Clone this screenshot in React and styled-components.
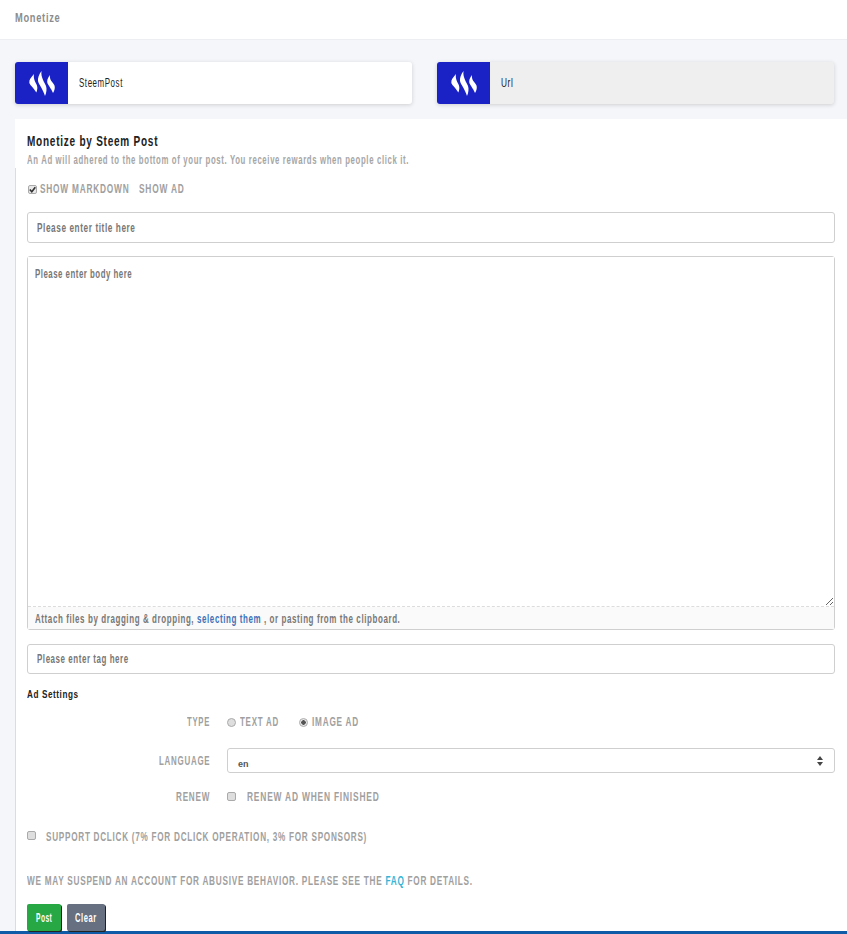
import React from "react";
import styled, { createGlobalStyle, css } from "styled-components";

const sans = `"Liberation Sans", Arial, sans-serif`;
const checkSvg = `url("data:image/svg+xml,%3Csvg xmlns='http://www.w3.org/2000/svg' width='9' height='9'%3E%3Cpath d='M1.800 4.500l2 2.200 3.500-4.400' fill='none' stroke='%23333' stroke-width='1.700'/%3E%3C/svg%3E")`;

const Global = createGlobalStyle`
  html, body { margin: 0; padding: 0; background: #f5f6f9; }
  body { font-family: ${sans}; overflow: hidden; }
  * { box-sizing: border-box; }
`;

/* The reference uses a condensed display face; no such font is installed, so
   text is drawn in Liberation Sans and narrowed to the width it has there. */
const Cond = styled.span`
  display: inline-block;
  flex: none;
  width: ${p => p.$w}px;
  margin-left: ${p => p.$ml || 0}px;
  white-space: nowrap;
  transform: scaleX(${p => p.$s});
  transform-origin: left center;
`;

const Page = styled.div`
  height: 934px;
  display: flex;
  flex-direction: column;
  overflow: hidden;
`;
const TopBar = styled.header`
  height: 40px;
  flex: none;
  background: #fff;
  border-bottom: 1px solid #eceef1;
  padding: 10px 15px 0;
  font-size: 13px;
  line-height: 15px;
  font-weight: 700;
  letter-spacing: 0.975px;
  color: #8c8c8c;
`;
const Cards = styled.div`
  display: grid;
  grid-template-columns: 397px 397px;
  gap: 25px;
  padding: 22px 0 15px 15px;
  flex: none;
`;
const Card = styled.div`
  height: 42px;
  display: flex;
  align-items: center;
  background: ${p => (p.$muted ? "#efefef" : "#fff")};
  border-radius: 3px;
  box-shadow: 0 1px 4px rgba(0, 0, 0, 0.16);
  overflow: hidden;
`;
const CardIcon = styled.div`
  width: 53px;
  height: 42px;
  flex: none;
  background: #1a22c6;
  display: flex;
  align-items: center;
  justify-content: center;
`;
const CardLabel = styled.div`
  margin-left: 11px;
  font-size: 12px;
  letter-spacing: 0.87px;
  color: #222;
`;
const Content = styled.main`
  flex: 1;
  margin-left: 15px;
  background: #fff;
  padding: 14px 12px 0;
  position: relative;
`;
const SideLine = styled.div`
  position: absolute;
  left: 0;
  top: 49px;
  bottom: 0;
  width: 1px;
  background: #dcdcdc;
`;
const Title = styled.h2`
  margin: 0;
  font-size: 15px;
  line-height: 16px;
  font-weight: 700;
  letter-spacing: 1.125px;
  color: #222;
`;
const Sub = styled.p`
  margin: 4px 0 0;
  font-size: 12px;
  line-height: 14px;
  font-weight: 700;
  letter-spacing: 1px;
  color: #a6a6a6;
`;
const labelText = css`
  font-size: 12px;
  line-height: 14px;
  font-weight: 700;
  letter-spacing: 1.14px;
  color: #a0a0a0;
`;
const Tabs = styled.div`
  ${labelText}
  display: flex;
  align-items: center;
  margin-top: 14px;
  height: 16px;
`;
const box = css`
  appearance: none;
  width: 9px;
  height: 9px;
  flex: none;
  background-color: #dedede;
  border: 1px solid #aaa;
`;
const Check = styled.input.attrs({ type: "checkbox" })`
  ${box}
  border-radius: 2px;
  margin: ${p => p.$m || "0 3px 0 1px"};
  transform: translateY(${p => p.$up || 0}px);
  &:checked {
    background-image: ${checkSvg};
    background-position: center;
    background-repeat: no-repeat;
    background-color: #e8e8e8;
  }
`;
const Radio = styled.input.attrs({ type: "radio" })`
  ${box}
  border-radius: 50%;
  margin: ${p => p.$m || "0 4px 0 0"};
  &:checked {
    background: radial-gradient(circle, #555 0 2px, #e8e8e8 2.500px);
  }
`;
const Field = styled.div`
  display: flex;
  align-items: center;
  width: 808px;
  height: ${p => p.$h || "31px"};
  margin-top: ${p => p.$mt || "0"};
  border: 1px solid #cfcfcf;
  border-radius: 3px;
  padding: 0 9px;
  font-size: 12px;
  font-weight: 700;
  letter-spacing: 0.85px;
  color: #777;
`;
const Editor = styled.div`
  position: relative;
  margin-top: 13px;
  width: 808px;
  height: 374px;
  border: 1px solid #cfcfcf;
  border-radius: 3px;
  display: flex;
  flex-direction: column;
`;
const Body = styled.textarea`
  flex: 1;
  display: block;
  width: 100%;
  border: 0;
  border-bottom: 1px dashed #dcdcdc;
  outline: none;
`;
const BodyHint = styled.div`
  position: absolute;
  left: 7px;
  top: 10px;
  font-size: 12px;
  line-height: 14px;
  font-weight: 700;
  letter-spacing: 0.78px;
  color: #777;
  pointer-events: none;
`;
const Attach = styled.div`
  height: 22px;
  flex: none;
  background: #fafafa;
  padding: 0 7px;
  font-size: 12px;
  line-height: 24px;
  font-weight: 700;
  letter-spacing: 0.9px;
  color: #777;
`;
const BlueLink = styled.a`
  color: #3f72b8;
`;
const Section = styled.h3`
  margin: 13px 0 0;
  font-size: 11.5px;
  line-height: 14px;
  font-weight: 700;
  letter-spacing: 0.82px;
  color: #222;
`;
const Row = styled.div`
  display: grid;
  grid-template-columns: 183px 1fr;
  column-gap: 17px;
  align-items: center;
  margin-top: ${p => p.$mt};
`;
const RowLabel = styled.div`
  ${labelText}
  display: flex;
  justify-content: flex-end;
`;
const Controls = styled.div`
  ${labelText}
  display: flex;
  align-items: center;
`;
const Select = styled.select`
  display: block;
  width: 608px;
  height: 25px;
  appearance: none;
  border: 1px solid #cfcfcf;
  border-radius: 3px;
  background: #fff url("data:image/svg+xml,%3Csvg xmlns='http://www.w3.org/2000/svg' width='6' height='10'%3E%3Cpath d='M3 0l3 4H0zM3 10L0 6h6z' fill='%23444'/%3E%3C/svg%3E") no-repeat right 11px center;
  padding: 6px 10px 0;
  font-family: ${sans};
  font-size: 9px;
  font-weight: 700;
  color: #555;
  outline: none;
`;
const Line = styled.div`
  ${labelText}
  letter-spacing: 1.07px;
  display: flex;
  align-items: center;
  margin-top: ${p => p.$mt};
`;
const Notice = styled.p`
  ${labelText}
  letter-spacing: 1.07px;
  margin: 30px 0 0;
`;
const FaqLink = styled.a`
  color: #35b5d6;
`;
const Buttons = styled.div`
  display: flex;
  gap: 6px;
  margin-top: 16px;
`;
const Button = styled.button`
  display: flex;
  align-items: center;
  justify-content: center;
  width: ${p => p.$w};
  height: 27px;
  padding: 0;
  border: 0;
  border-radius: 2px;
  background: ${p => p.$bg};
  box-shadow: 1px 1px 0 #222;
  color: #fff;
  font-family: ${sans};
  font-size: 12px;
  font-weight: 700;
  letter-spacing: 0.87px;
`;
const BottomBar = styled.div`
  height: 3px;
  flex: none;
  background: #0f5ba8;
`;

const SteemLogo = () => (
  <svg width="26" height="25" viewBox="0 0 26 25" fill="#fff">
    <path d="M5 3C2.500 6 0 8.500 .3 11.500C.6 14 4.500 16.500 7.300 21.500C8.300 19 8.800 16.500 7.800 14C6.800 11.500 4 8 5 3Z" />
    <path d="M12.500 0C10 3.500 8.600 7 9 10C9.500 13 14 18 16 25C17.500 21.500 18 18 17 15C16 12 11.500 6.500 12.500 0Z" />
    <path d="M21 4C19.200 6.500 17.800 9 18.300 11.500C18.800 14 22 17 24 22C25.500 19.500 26.200 17 25.500 14.500C24.800 12 20 9.500 21 4Z" />
  </svg>
);

export default function App() {
  return (
    <Page>
      <Global />
      <TopBar><Cond $w={45} $s={0.716}>Monetize</Cond></TopBar>
      <Cards>
        <Card>
          <CardIcon><SteemLogo /></CardIcon>
          <CardLabel><Cond $w={44} $s={0.66}>SteemPost</Cond></CardLabel>
        </Card>
        <Card $muted>
          <CardIcon><SteemLogo /></CardIcon>
          <CardLabel><Cond $w={12} $s={0.69}>Url</Cond></CardLabel>
        </Card>
      </Cards>
      <Content>
        <SideLine />
        <Title><Cond $w={131} $s={0.668}>Monetize by Steem Post</Cond></Title>
        <Sub><Cond $w={382} $s={0.647}>An Ad will adhered to the bottom of your post. You receive rewards when people click it.</Cond></Sub>
        <Tabs>
          <Check defaultChecked />
          <Cond $w={89} $s={0.691}>SHOW MARKDOWN</Cond>
          <Cond $w={45} $ml={10} $s={0.695}>SHOW AD</Cond>
        </Tabs>
        <Field $mt="15px"><Cond $w={98} $s={0.686}>Please enter title here</Cond></Field>
        <Editor>
          <Body aria-label="body" />
          <BodyHint><Cond $w={97} $s={0.654}>Please enter body here</Cond></BodyHint>
          <Attach>
            <Cond $w={364} $s={0.664}>
              Attach files by dragging &amp; dropping, <BlueLink>selecting them</BlueLink> , or pasting from the clipboard.
            </Cond>
          </Attach>
        </Editor>
        <Field $mt="14px" $h="30px"><Cond $w={91} $s={0.662}>Please enter tag here</Cond></Field>
        <Section><Cond $w={51} $s={0.709}>Ad Settings</Cond></Section>
        <Row $mt="14px">
          <RowLabel><Cond $w={23} $s={0.642}>TYPE</Cond></RowLabel>
          <Controls>
            <Radio name="adtype" />
            <Cond $w={39} $s={0.66}>TEXT AD</Cond>
            <Radio name="adtype" defaultChecked $m="0 4px 0 20px" />
            <Cond $w={47} $s={0.684}>IMAGE AD</Cond>
          </Controls>
        </Row>
        <Row $mt="19px">
          <RowLabel><Cond $w={51} $s={0.66}>LANGUAGE</Cond></RowLabel>
          <Select defaultValue="en"><option value="en">en</option></Select>
        </Row>
        <Row $mt="17px">
          <RowLabel><Cond $w={34} $s={0.678}>RENEW</Cond></RowLabel>
          <Controls>
            <Check $m="0 11px 0 0" $up={-1} />
            <Cond $w={132} $s={0.7}>RENEW AD WHEN FINISHED</Cond>
          </Controls>
        </Row>
        <Line $mt="26px">
          <Check $m="0 10px 0 0" $up={-2} />
          <Cond $w={321} $s={0.681}>SUPPORT DCLICK (7% FOR DCLICK OPERATION, 3% FOR SPONSORS)</Cond>
        </Line>
        <Notice>
          <Cond $w={445} $s={0.685}>
            WE MAY SUSPEND AN ACCOUNT FOR ABUSIVE BEHAVIOR. PLEASE SEE THE <FaqLink>FAQ</FaqLink> FOR DETAILS.
          </Cond>
        </Notice>
        <Buttons>
          <Button $w="34px" $bg="#28a745"><Cond $w={17} $s={0.55}>Post</Cond></Button>
          <Button $w="38px" $bg="#667080"><Cond $w={22} $s={0.63}>Clear</Cond></Button>
        </Buttons>
      </Content>
      <BottomBar />
    </Page>
  );
}
